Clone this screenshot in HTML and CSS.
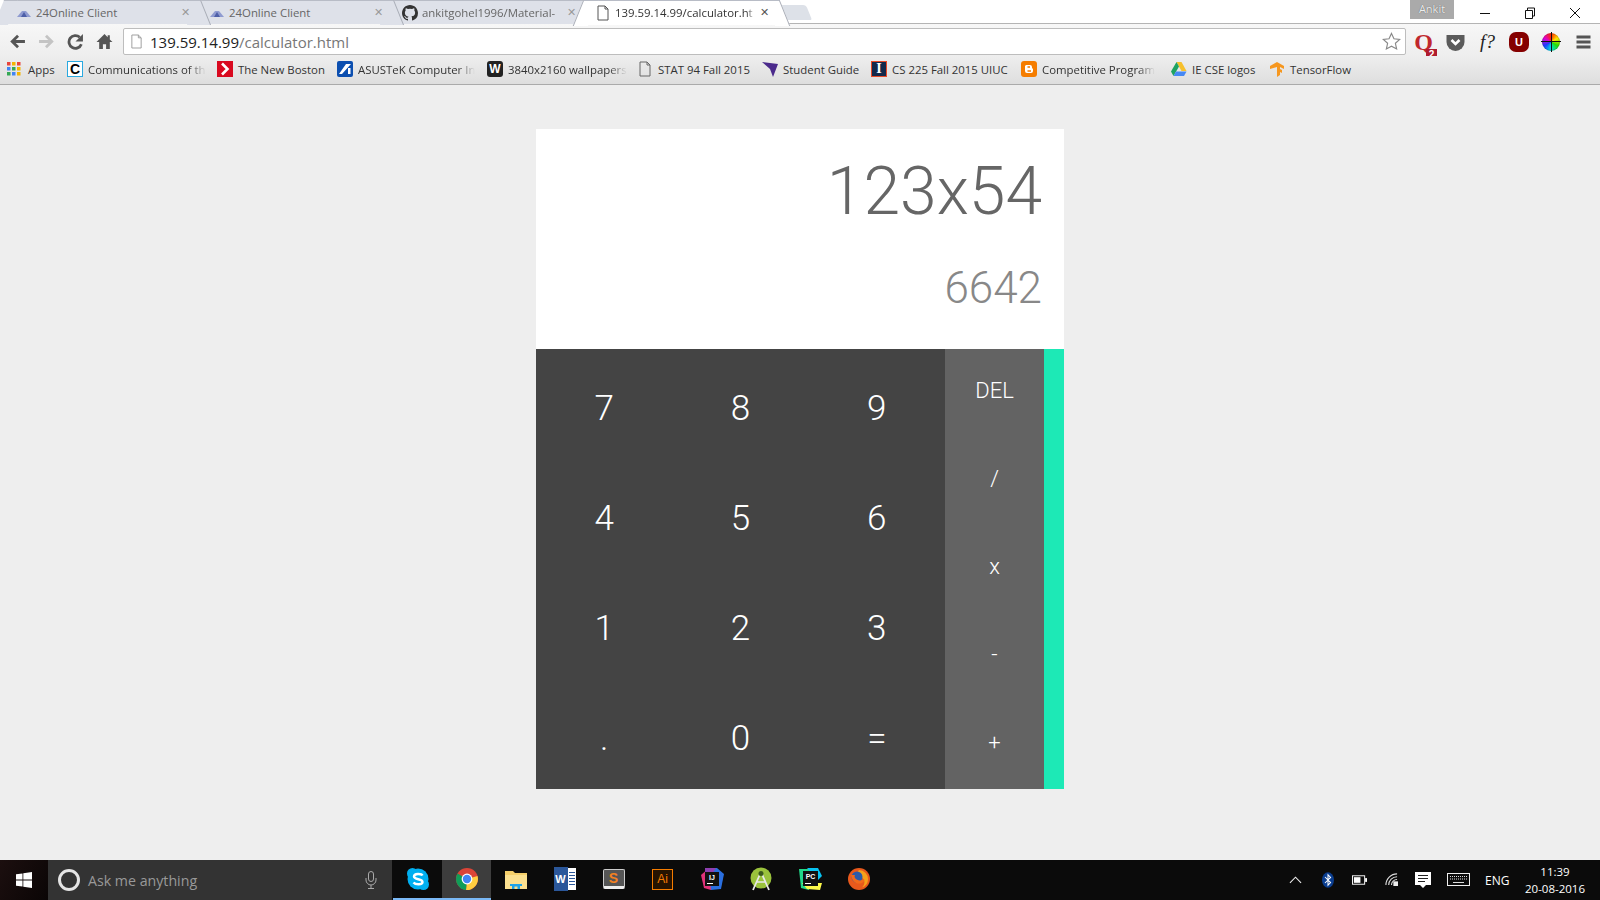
FILE: index.html
```html
<!DOCTYPE html>
<html lang="en">
<head>
  <meta charset="UTF-8">
  <title>Calculator</title>
  <link rel="stylesheet" href="styles.css">
</head>
<body>
  <header class="browser">
    <div class="tabStrip">
      <div class="tab">
        <svg class="tabIcon" viewBox="0 0 16 16"><path d="M1 12 6 6h4l5 6z" fill="#8f9bd0"/><path d="M5 12 8 7l3 5z" fill="#4e5fa8"/></svg>
        <span class="tabTitle">24Online Client</span>
        <span class="tabClose">✕</span>
      </div>
      <div class="tab">
        <svg class="tabIcon" viewBox="0 0 16 16"><path d="M1 12 6 6h4l5 6z" fill="#8f9bd0"/><path d="M5 12 8 7l3 5z" fill="#4e5fa8"/></svg>
        <span class="tabTitle">24Online Client</span>
        <span class="tabClose">✕</span>
      </div>
      <div class="tab">
        <svg class="tabIcon" viewBox="0 0 16 16"><path fill="#333" d="M8 0C3.6 0 0 3.6 0 8c0 3.5 2.3 6.5 5.5 7.6.4.1.5-.2.5-.4v-1.4c-2.2.5-2.7-1-2.7-1-.4-.9-.9-1.2-.9-1.2-.7-.5.1-.5.1-.5.8.1 1.2.8 1.2.8.7 1.2 1.9.9 2.3.7.1-.5.3-.9.5-1.1-1.8-.2-3.6-.9-3.6-4 0-.9.3-1.6.8-2.1-.1-.2-.4-1 .1-2.1 0 0 .7-.2 2.2.8a7.500 7.500 0 0 1 4 0c1.500-1 2.200-.8 2.200-.8.400 1.100.200 1.900.100 2.100.500.600.800 1.300.800 2.100 0 3.100-1.900 3.700-3.700 3.900.300.300.600.800.600 1.500v2.200c0 .200.100.500.600.400A8 8 0 0 0 16 8c0-4.400-3.600-8-8-8z"/></svg>
        <span class="tabTitle tabFade">ankitgohel1996/Material-</span>
        <span class="tabClose">✕</span>
      </div>
      <div class="tab tabActive">
        <svg class="tabIcon" viewBox="0 0 16 16"><path d="M3 1h7l3 3v11H3z" fill="#fff" stroke="#555"/><path d="M10 1v3h3" fill="none" stroke="#555"/></svg>
        <span class="tabTitle tabFade">139.59.14.99/calculator.ht</span>
        <span class="tabClose">✕</span>
      </div>
      <div class="newTab"></div>
      <div class="windowControls">
        <span class="profile">Ankit</span>
        <svg class="winBtn" viewBox="0 0 12 12"><path d="M1 6.500h10" stroke="#111"/></svg>
        <svg class="winBtn" viewBox="0 0 12 12"><path d="M1.500 3.500h7v8h-7z M3.500 3.500v-2.500h7v8h-2" fill="none" stroke="#111"/></svg>
        <svg class="winBtn" viewBox="0 0 12 12"><path d="M1 1l10 10M11 1 1 11" stroke="#111"/></svg>
      </div>
    </div>
    <div class="toolbar">
      <svg class="navIcon" viewBox="0 0 16 16"><path d="M15 8H4M8.500 2.500 3 8l5.500 5.500" fill="none" stroke="#555" stroke-width="2.600"/></svg>
      <svg class="navIcon" viewBox="0 0 16 16"><path d="M1 8h11M7.500 2.500 13 8l-5.500 5.500" fill="none" stroke="#c4c4c4" stroke-width="2.600"/></svg>
      <svg class="navIcon" viewBox="0 0 16 16"><path d="M13.500 10.500A6 6 0 1 1 12 4" fill="none" stroke="#555" stroke-width="2.600"/><path d="M15 1v7H8z" fill="#555"/></svg>
      <svg class="navIcon" viewBox="0 0 16 16"><path d="M8 1 .5 8.500H3V15h3.500v-4.500h3V15H13V8.500h2.500L13 6V2h-2v2z" fill="#555"/></svg>
      <div class="omnibox">
        <svg class="omniPage" viewBox="0 0 14 16"><path d="M2 1h7l3 3v11H2z" fill="#fff" stroke="#999"/><path d="M9 1v3h3" fill="none" stroke="#999"/></svg>
        <span class="omniUrl"><span class="omniHost">139.59.14.99</span>/calculator.html</span>
        <svg class="omniStar" viewBox="0 0 20 20"><path d="M10 1.500l2.600 5.600 6 .7-4.500 4.100 1.300 6L10 14.900l-5.400 3 1.300-6L1.400 7.800l6-.7z" fill="#fff" stroke="#888" stroke-width="1.200"/></svg>
      </div>
      <div class="extensions">
        <span class="ext extQ">Q</span>
        <svg class="ext" viewBox="0 0 20 20"><path d="M1 3h18v7a9 9 0 0 1-18 0z" fill="#5b5b5b"/><path d="M6 8l4 4 4-4" fill="none" stroke="#fff" stroke-width="2.600"/></svg>
        <span class="ext extF">f?</span>
        <span class="ext extU">U</span>
        <span class="ext extWheel"></span>
        <svg class="ext" viewBox="0 0 20 20"><path d="M3 3.500h14v3H3zM3 8.500h14v3H3zM3 13.500h14v3H3z" fill="#555"/></svg>
        <span class="extBadge">2</span>
      </div>
    </div>
    <nav class="bookmarks">
      <a class="mark markApps">
        <svg class="markIcon" viewBox="0 0 14 14"><g fill="#e8453c"><rect x="0" y="0" width="3.500" height="3.500"/><rect x="5" y="0" width="3.500" height="3.500" fill="#f4b400"/><rect x="10" y="0" width="3.500" height="3.500"/><rect x="0" y="5" width="3.500" height="3.500" fill="#4285f4"/><rect x="5" y="5" width="3.500" height="3.500" fill="#34a853"/><rect x="10" y="5" width="3.500" height="3.500" fill="#f4b400"/><rect x="0" y="10" width="3.500" height="3.500" fill="#34a853"/><rect x="5" y="10" width="3.500" height="3.500" fill="#4285f4"/><rect x="10" y="10" width="3.500" height="3.500" fill="#f4b400"/></g></svg>
        <span class="markText">Apps</span>
      </a>
      <a class="mark markComm">
        <span class="markBox boxComm">C</span>
        <span class="markText fade">Communications of th</span>
      </a>
      <a class="mark markBoston">
        <svg class="markIcon" viewBox="0 0 16 16"><path d="M0 0h16v16H0z" fill="#d9091f"/><path d="M5 2.500 10.500 8 5 13.500" fill="none" stroke="#fff" stroke-width="2.600"/></svg>
        <span class="markText">The New Boston</span>
      </a>
      <a class="mark markAsus">
        <svg class="markIcon" viewBox="0 0 16 16"><rect width="16" height="16" rx="2" fill="#0c4fb0"/><path d="M2 13 9 3h5L5 13zM11 7h2.500v6H11z" fill="#fff"/></svg>
        <span class="markText fade">ASUSTeK Computer In</span>
      </a>
      <a class="mark markWall">
        <span class="markBox boxWall">W</span>
        <span class="markText fade">3840x2160 wallpapers</span>
      </a>
      <a class="mark markStat">
        <svg class="markIcon" viewBox="0 0 16 16"><path d="M3 1h7l3 3v11H3z" fill="none" stroke="#666"/><path d="M10 1v3h3" fill="none" stroke="#666"/></svg>
        <span class="markText">STAT 94 Fall 2015</span>
      </a>
      <a class="mark markStudent">
        <svg class="markIcon" viewBox="0 0 16 16"><path d="M0 1l16 2-5 13-3-8z" fill="#4b2a8c"/></svg>
        <span class="markText">Student Guide</span>
      </a>
      <a class="mark markCs">
        <span class="markBox boxCs">I</span>
        <span class="markText">CS 225 Fall 2015 UIUC</span>
      </a>
      <a class="mark markComp">
        <svg class="markIcon" viewBox="0 0 16 16"><rect width="16" height="16" rx="3" fill="#f57d00"/><path d="M5 4h4a2 2 0 0 1 2 2v1l1 1v2a2 2 0 0 1-2 2H6a2 2 0 0 1-2-2V5z" fill="#fff"/><path d="M6.500 6h2.500M6.500 10h3.500" stroke="#f57d00" stroke-width="1.300"/></svg>
        <span class="markText fade">Competitive Program</span>
      </a>
      <a class="mark markLogos">
        <svg class="markIcon" viewBox="0 0 16 16"><path d="M5.500 1h5l5 9h-5z" fill="#f6c02c"/><path d="M5.500 1 0 10.500 2.500 15l5.500-9.500z" fill="#1ea362"/><path d="M2.500 15h10.500l2.500-4.500H5z" fill="#4688f4"/></svg>
        <span class="markText">IE CSE logos</span>
      </a>
      <a class="mark markFlow">
        <svg class="markIcon" viewBox="0 0 16 16"><path d="M1 5 8 1l7 4v3l-4-2v2l2 1v3l-2-1v3l-3 2V6L1 8z" fill="#f6971f"/></svg>
        <span class="markText">TensorFlow</span>
      </a>
    </nav>
  </header>

  <main class="page">
    <div class="calculator">
      <div class="display">
        <div class="expression">123x54</div>
        <div class="result">6642</div>
      </div>
      <div class="pad">
        <div class="numbers">
          <button class="key">7</button>
          <button class="key">8</button>
          <button class="key">9</button>
          <button class="key">4</button>
          <button class="key">5</button>
          <button class="key">6</button>
          <button class="key">1</button>
          <button class="key">2</button>
          <button class="key">3</button>
          <button class="key">.</button>
          <button class="key">0</button>
          <button class="key">=</button>
        </div>
        <div class="operators">
          <button class="op">DEL</button>
          <button class="op">/</button>
          <button class="op">x</button>
          <button class="op">-</button>
          <button class="op">+</button>
        </div>
        <div class="accent"></div>
      </div>
    </div>
  </main>

  <footer class="taskbar">
    <div class="startBtn">
      <svg class="startLogo" viewBox="0 0 16 16"><path d="M0 2.300 6.500 1.400v6.200H0zM7.300 1.300 16 0v7.600H7.300zM0 8.400h6.500v6.200L0 13.700zM7.300 8.400H16V16l-8.700-1.300z" fill="#fff"/></svg>
    </div>
    <div class="searchBox">
      <span class="cortana"></span>
      <span class="searchText">Ask me anything</span>
      <svg class="searchMic" viewBox="0 0 12 18"><rect x="3.500" y=".5" width="5" height="10" rx="2.500" fill="none" stroke="#aaa"/><path d="M1 7v2a5 5 0 0 0 10 0V7M6 14v3M3 17.500h6" fill="none" stroke="#aaa"/></svg>
    </div>
    <div class="taskIcons">
      <div class="taskItem isOpen">
        <svg class="taskIcon" viewBox="0 0 24 24"><circle cx="12" cy="12" r="10.500" fill="#00aff0"/><circle cx="6.500" cy="6.500" r="5.500" fill="#00aff0"/><circle cx="17.500" cy="17.500" r="5.500" fill="#00aff0"/><path d="M16.500 8.500C15.500 6.500 8 6 8 9.500c0 3.500 8.500 2 8.500 5.500 0 3-7 3-9 .5" fill="none" stroke="#fff" stroke-width="2.400"/></svg>
      </div>
      <div class="taskItem isActive">
        <svg class="taskIcon" viewBox="0 0 24 24"><circle cx="12" cy="12" r="11" fill="#db4437"/><path d="M12 12 22.500 9A11 11 0 0 1 11 23z" fill="#ffcd40"/><path d="M12 12 11 23A11 11 0 0 1 2.500 6.500z" fill="#0f9d58"/><circle cx="12" cy="12" r="5.400" fill="#fff"/><circle cx="12" cy="12" r="4.200" fill="#4285f4"/></svg>
      </div>
      <div class="taskItem">
        <svg class="taskIcon" viewBox="0 0 24 24"><path d="M1 4h8l2 2h12v16H1z" fill="#f5cf6a"/><path d="M1 8h22v14H1z" fill="#fbe08f"/><path d="M8 22v-5h8v5h-2.500v-2.500h-3V22z" fill="#1fa3e8"/><path d="M6 17h12v2H6z" fill="#1fa3e8"/></svg>
      </div>
      <div class="taskItem">
        <span class="taskWord">
          <span class="wordBadge">W</span>
          <span class="wordLines"></span>
        </span>
      </div>
      <div class="taskItem">
        <span class="sublime">S</span>
      </div>
      <div class="taskItem">
        <span class="illustrator">Ai</span>
      </div>
      <div class="taskItem">
        <svg class="taskIcon" viewBox="0 0 24 24">
          <path d="M1 8 9 1l6 3-4 19-7-2z" fill="#e0337a"/>
          <path d="M9 1h8l7 6-3 15-10 1z" fill="#2a6fe0"/>
          <path d="M5 1h11l-5 8-6-1z" fill="#8e3fb0"/>
          <rect x="5" y="5" width="14" height="14" fill="#111"/>
          <text class="iconText" x="12" y="12.500">IJ</text>
          <path d="M7 16.500h6" stroke="#fff"/>
        </svg>
      </div>
      <div class="taskItem">
        <svg class="taskIcon" viewBox="0 0 24 24"><circle cx="12" cy="11" r="10.500" fill="#9ac23c"/><path d="M12 5 4 23M12 5l8 18" stroke="#e8e8e8" stroke-width="1.800" fill="none"/><path d="M7 15h10" stroke="#e8e8e8" stroke-width="1.500"/><circle cx="12" cy="6.500" r="2.500" fill="#3c5a1c"/></svg>
      </div>
      <div class="taskItem">
        <svg class="taskIcon" viewBox="0 0 24 24">
          <path d="M1 2h12l-2 21-8-2z" fill="#21d789"/>
          <path d="M9 1h11l4 8-4 4z" fill="#07c3f2"/>
          <path d="M4 16h20l-2 7-13-1z" fill="#fcf84a"/>
          <rect x="5" y="4" width="15" height="15" fill="#111"/>
          <text class="iconText" x="12.500" y="11.500">PC</text>
          <path d="M7 16.500h6" stroke="#fff"/>
        </svg>
      </div>
      <div class="taskItem">
        <svg class="taskIcon" viewBox="0 0 24 24"><circle cx="12" cy="12" r="11" fill="#e8591c"/><path d="M12 3a9 9 0 0 1 9 9 9 9 0 0 1-6 8.500C19 17 18 11 13 10 10 9.500 9 7 12 3z" fill="#f7a11a"/><circle cx="10" cy="10" r="5.500" fill="#2c5aa8"/><path d="M4 8c1 7 6 10 11 8 2-1 3-3 2-4-2 2-7 2-9-1-1-1.500 0-3 0-3z" fill="#f26a1b"/></svg>
      </div>
    </div>
    <div class="tray">
      <svg class="trayChevron" viewBox="0 0 14 8"><path d="M1 7l6-6 6 6" fill="none" stroke="#eee" stroke-width="1.200"/></svg>
      <svg class="trayBlue" viewBox="0 0 14 18"><ellipse cx="7" cy="9" rx="7" ry="9" fill="#0a3d8f"/><path d="M3.500 5.500 10 12 7 15V3l3 3-6.500 6.500" fill="none" stroke="#fff" stroke-width="1.200"/></svg>
      <svg class="trayBattery" viewBox="0 0 16 10"><rect x=".5" y=".5" width="13" height="9" fill="none" stroke="#fff"/><rect x="2" y="2" width="7" height="6" fill="#fff"/><rect x="14" y="3" width="2" height="4" fill="#fff"/></svg>
      <svg class="trayWifi" viewBox="0 0 14 14"><path d="M1 13A12 12 0 0 1 13 1M4 13a9 9 0 0 1 9-9M7 13a6 6 0 0 1 6-6" fill="none" stroke="#ddd" stroke-width="1.200"/><rect x="9" y="9" width="5" height="5" fill="#eee"/></svg>
      <svg class="trayAction" viewBox="0 0 16 17"><path d="M0 0h16v13h-5l-3 3-3-3H0z" fill="#fff"/><path d="M3 3.500h10M3 6.500h10M3 9.500h7" stroke="#222"/></svg>
      <svg class="trayKeys" viewBox="0 0 23 13"><rect x=".5" y=".5" width="22" height="12" fill="none" stroke="#eee"/><path d="M3 3.500h17M3 6h17" stroke="#ddd" stroke-dasharray="1 1"/><path d="M6 9.500h11" stroke="#ddd"/></svg>
      <span class="trayLang">ENG</span>
      <span class="trayClock"><span>11:39</span><span>20-08-2016</span></span>
    </div>
  </footer>
</body>
</html>
```

FILE: styles.css
```css
* {
  margin: 0;
  padding: 0;
  box-sizing: border-box;
}
html, body {
  height: 100%;
}
body {
  display: flex;
  flex-direction: column;
  overflow: hidden;
  font-family: "Open Sans", "Noto Sans", sans-serif;
  background-color: #eee;
}
.browser {
  height: 85px;
  background-color: #fff;
  border-bottom: 1px solid #aaa;
}
.tabStrip {
  display: flex;
  height: 24px;
  padding-left: 6px;
  background-color: #fff;
  border-bottom: 1px solid #b4b4b4;
}
.tab {
  position: relative;
  display: flex;
  align-items: center;
  width: 193px;
  height: 24px;
  padding: 0 6px 0 10px;
  font-size: 11.400px;
  color: #666;
  background-color: #dee1e9;
  border-top: 1px solid #b8bcc6;
}
.tab::before, .tab::after {
  content: "";
  position: absolute;
  top: -1px;
  width: 14px;
  height: 24px;
  background-color: #dee1e9;
  border-top: 1px solid #b8bcc6;
}
.tab::before {
  left: -7px;
  transform: skewX(-22deg);
}
.tab::after {
  right: -7px;
  z-index: 1;
  transform: skewX(22deg);
  border-right: 1px solid #a8acb6;
}
.tabActive {
  z-index: 2;
  height: 25px;
  padding-bottom: 1px;
  color: #333;
  background-color: #fff;
}
.tabActive::before, .tabActive::after {
  height: 25px;
  background-color: #fff;
}
.tabActive::before {
  border-left: 1px solid #a8acb6;
}
.tabIcon {
  position: relative;
  z-index: 2;
  flex: none;
  width: 16px;
  height: 16px;
  margin-right: 4px;
}
.tabTitle {
  position: relative;
  z-index: 2;
  flex: 1;
  white-space: nowrap;
}
.tabFade {
  -webkit-mask-image: linear-gradient(to right, #000 93%, transparent);
  mask-image: linear-gradient(to right, #000 93%, transparent);
}
.tabClose {
  position: relative;
  z-index: 2;
  flex: none;
  width: 12px;
  margin-left: 4px;
  font-family: "DejaVu Sans", sans-serif;
  font-size: 11px;
  font-weight: bold;
  color: #999;
}
.tabActive .tabClose {
  color: #555;
}
.newTab {
  width: 26px;
  height: 15px;
  margin: 5px 0 0 5px;
  background-color: #dde1e8;
  border-radius: 3px 3px 2px 2px;
  transform: skewX(22deg);
}
.windowControls {
  display: flex;
  margin-left: auto;
  align-items: flex-start;
}
.profile {
  width: 44px;
  height: 19px;
  margin-right: 11px;
  font-size: 11px;
  line-height: 17px;
  text-align: center;
  color: #eee;
  background-color: #aaa;
  text-shadow: 0 0 1px #555;
}
.winBtn {
  width: 12px;
  height: 12px;
  margin: 7px 19px 0 14px;
}
.toolbar {
  display: flex;
  align-items: center;
  height: 32px;
  padding: 3px 0 0 9px;
  background: linear-gradient(#f7f7f7, #eee);
}
.navIcon {
  flex: none;
  width: 17px;
  height: 17px;
  margin-right: 12px;
}
.omnibox {
  display: flex;
  align-items: center;
  flex: none;
  width: 1283px;
  height: 27px;
  margin-left: -2px;
  padding: 0 4px 0 6px;
  background-color: #fff;
  border: 1px solid #bdbdbd;
  border-radius: 2px;
}
.omniPage {
  width: 13px;
  height: 15px;
  margin-right: 7px;
}
.omniUrl {
  flex: 1;
  font-size: 15px;
  color: #777;
}
.omniHost {
  color: #222;
}
.omniStar {
  width: 19px;
  height: 19px;
}
.extensions {
  position: relative;
  display: flex;
  align-items: center;
  gap: 11px;
  margin-left: 7px;
}
.ext {
  position: relative;
  flex: none;
  display: block;
  width: 21px;
  height: 20px;
  text-align: center;
}
.extQ {
  font-family: "Liberation Serif", serif;
  font-size: 24px;
  font-weight: bold;
  line-height: 20px;
  color: #c0282d;
}
.extBadge {
  position: absolute;
  left: 13px;
  top: 17px;
  width: 11px;
  height: 11px;
  font-family: "Liberation Sans", sans-serif;
  font-size: 10px;
  font-weight: bold;
  line-height: 11px;
  text-align: center;
  color: #fff;
  background-color: #b01c2e;
}
.extF {
  font-family: "Liberation Serif", serif;
  font-size: 19px;
  font-style: italic;
  line-height: 20px;
  color: #222;
}
.extU {
  width: 20px;
  font-family: "Liberation Sans", sans-serif;
  font-size: 11px;
  font-weight: bold;
  line-height: 20px;
  color: #fff;
  background-color: #850000;
  border-radius: 7px;
}
.extWheel {
  width: 18px;
  height: 18px;
  margin: 0 2px;
  background: conic-gradient(#ff2a00, #ffe600, #22e000, #00e0e0, #1a3cff, #e000d0, #ff2a00);
  border-radius: 50%;
  box-shadow: inset 0 0 0 1px rgba(0, 0, 0, 0.15);
}
.extWheel::before {
  content: "";
  position: absolute;
  top: -1px;
  left: 8.500px;
  width: 1px;
  height: 20px;
  background-color: #111;
}
.extWheel::after {
  content: "";
  position: absolute;
  top: 8.500px;
  left: -1px;
  width: 20px;
  height: 1px;
  background-color: #111;
}
.bookmarks {
  position: relative;
  height: 28px;
  background: linear-gradient(#eee, #dedede);
}
.mark {
  position: absolute;
  top: 4px;
  display: flex;
  align-items: center;
  height: 18px;
  font-size: 11.400px;
  color: #333;
  white-space: nowrap;
}
.markApps { left: 7px; }
.markComm { left: 67px; }
.markBoston { left: 217px; }
.markAsus { left: 337px; }
.markWall { left: 487px; }
.markStat { left: 637px; }
.markStudent { left: 762px; }
.markCs { left: 871px; }
.markComp { left: 1021px; }
.markLogos { left: 1171px; }
.markFlow { left: 1269px; }
.markIcon, .markBox {
  flex: none;
  width: 16px;
  height: 16px;
  margin-right: 5px;
}
.markApps .markIcon {
  width: 14px;
  height: 14px;
  margin-right: 7px;
}
.markBox {
  font-family: "Liberation Sans", sans-serif;
  font-weight: bold;
  line-height: 14px;
  text-align: center;
}
.boxComm {
  font-size: 14px;
  color: #000;
  background-color: #fff;
  border: 1px solid #29a9e0;
}
.boxWall {
  font-size: 12px;
  line-height: 16px;
  color: #fff;
  background-color: #222;
  border-radius: 3px;
}
.boxCs {
  font-family: "Liberation Serif", serif;
  font-size: 14px;
  color: #fff;
  background-color: #13294b;
  border: 1px solid #e84a27;
}
.fade {
  -webkit-mask-image: linear-gradient(to right, #000 85%, transparent);
  mask-image: linear-gradient(to right, #000 85%, transparent);
}
.page {
  flex: 1;
  display: flex;
  justify-content: center;
  padding-top: 44px;
}
.calculator {
  display: flex;
  flex-direction: column;
  width: 528px;
  height: 660px;
  font-family: Roboto, sans-serif;
  font-weight: 300;
}
.display {
  display: flex;
  flex-direction: column;
  height: 220px;
  padding: 0 22px;
  text-align: right;
  background-color: #fff;
}
.expression {
  margin-top: 18px;
  font-size: 66px;
  line-height: 90px;
  color: #666;
}
.result {
  margin-top: 21px;
  font-size: 44px;
  line-height: 60px;
  color: #888;
}
.pad {
  flex: 1;
  display: flex;
}
.numbers {
  flex: 1;
  display: grid;
  grid-template-columns: repeat(3, 1fr);
  grid-template-rows: repeat(4, 1fr);
  background-color: #444;
}
.operators {
  display: grid;
  grid-template-rows: repeat(5, 1fr);
  width: 99px;
  background-color: #636363;
}
.accent {
  width: 20px;
  background-color: #1de9b6;
}
.key, .op {
  font-family: inherit;
  font-weight: inherit;
  color: #fff;
  background: none;
  border: 0;
}
.key {
  padding-top: 8px;
  font-size: 35px;
}
.op {
  padding-bottom: 6px;
  font-size: 22px;
}
.taskbar {
  display: flex;
  flex: none;
  height: 40px;
  color: #fff;
  background-color: #0b0b0b;
}
.startBtn {
  display: flex;
  align-items: center;
  justify-content: center;
  width: 48px;
  background: linear-gradient(120deg, #1c0f0f, #0a0505);
}
.startLogo {
  width: 16px;
  height: 16px;
}
.searchBox {
  display: flex;
  align-items: center;
  width: 344px;
  padding-left: 10px;
  background-color: #333;
}
.cortana {
  width: 22px;
  height: 22px;
  border: 3px solid #e4e4e4;
  border-radius: 50%;
}
.searchText {
  flex: 1;
  margin-left: 8px;
  font-size: 14.200px;
  color: #999;
}
.searchMic {
  width: 12px;
  height: 18px;
  margin-right: 15px;
}
.taskIcons {
  display: flex;
  margin-left: 1px;
}
.taskItem {
  display: flex;
  align-items: center;
  justify-content: center;
  width: 49px;
  height: 40px;
  padding-bottom: 2px;
}
.isOpen, .isActive {
  border-bottom: 2px solid #7ab8f5;
  padding-bottom: 0;
}
.isActive {
  background-color: #3d3d3d;
}
.taskIcon {
  width: 24px;
  height: 24px;
}
.iconText {
  font-family: "Liberation Sans", sans-serif;
  font-size: 7px;
  font-weight: bold;
  text-anchor: middle;
  fill: #fff;
}
.taskWord {
  position: relative;
  display: block;
  width: 22px;
  height: 22px;
  background-color: #fff;
}
.wordBadge {
  position: absolute;
  top: -1px;
  left: 0;
  width: 14px;
  height: 24px;
  font-family: "Liberation Sans", sans-serif;
  font-size: 11px;
  font-weight: bold;
  line-height: 24px;
  text-align: center;
  background-color: #2b579a;
}
.wordLines {
  position: absolute;
  top: 4px;
  left: 15px;
  width: 6px;
  height: 14px;
  background: repeating-linear-gradient(#2b579a 0 1px, #fff 1px 3px);
}
.sublime {
  width: 22px;
  height: 20px;
  font-family: "Liberation Sans", sans-serif;
  font-size: 14px;
  font-weight: bold;
  line-height: 17px;
  text-align: center;
  color: #f48120;
  background-color: #555;
  border: 1px solid #ccc;
  border-bottom: 3px solid #eee;
  border-radius: 2px;
}
.illustrator {
  width: 21px;
  height: 21px;
  font-family: "Liberation Sans", sans-serif;
  font-size: 12px;
  line-height: 18px;
  text-align: center;
  color: #f57c00;
  background-color: #261300;
  border: 1px solid #f57c00;
}
.tray {
  position: relative;
  flex: 1;
}
.tray > * {
  position: absolute;
}
.trayChevron { left: 406px; top: 16px; width: 13px; height: 8px; }
.trayBlue { left: 439px; top: 12px; width: 12px; height: 16px; }
.trayBattery { left: 469px; top: 15px; width: 15px; height: 10px; }
.trayWifi { left: 502px; top: 13px; width: 13px; height: 13px; }
.trayAction { left: 532px; top: 12px; width: 16px; height: 17px; }
.trayKeys { left: 564px; top: 13px; width: 23px; height: 13px; }
.trayLang {
  left: 602px;
  top: 12px;
  font-size: 12px;
}
.trayClock {
  left: 637px;
  top: 3px;
  display: flex;
  flex-direction: column;
  align-items: center;
  width: 70px;
  font-size: 11.500px;
  line-height: 17px;
  white-space: nowrap;
}
```
